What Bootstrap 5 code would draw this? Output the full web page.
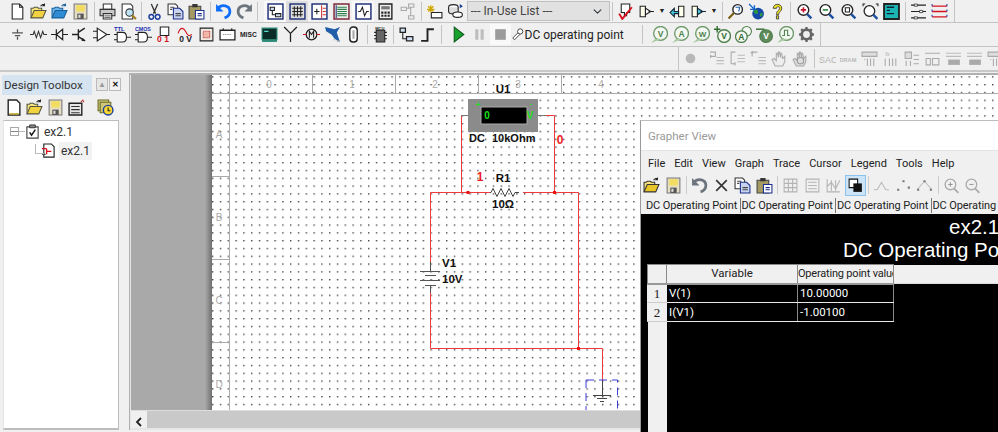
<!DOCTYPE html>
<html lang="en">
<head>
<meta charset="UTF-8">
<title>Multisim - ex2.1</title>
<link href="https://cdn.jsdelivr.net/npm/bootstrap@5.3.0/dist/css/bootstrap.min.css" rel="stylesheet">
<style>
html, body { height: 100%; }
body { background: #f0f0f0; overflow: hidden; font-family: Roboto, "Liberation Sans", sans-serif; font-size: 12px; color: #222; }
.app { width: 998px; height: 432px; overflow: hidden; }
/* toolbars */
.tbar { height: 23px; background: #f0f0f0; border-bottom: 1px solid #c4c4c4; align-items: center; }
.tbar-1 { height: 23px; }
.tbar-2 { height: 24px; }
.tbar-3 { height: 25px; border-bottom: 2px solid #c8c8c8; }
.tb-end { border-right: 1px solid #c4c4c4; height: 100%; }
.tb-btn { width: 21px; height: 21px; display: flex; align-items: center; justify-content: center; flex: none; }
.tb-btn svg { width: 17px; height: 17px; }
.tb-wide { width: 22px; }
.tb-on { background: #f9f9f9; }
.tb-on2 { background: #dedede; }
.tb-wrench { width: 14px; }
.tb-flip { transform: scaleX(-1); }
.tb-sep { width: 1px; height: 19px; background: #c4c4c4; margin: 0 2px 0 2.5px; flex: none; }
.tb-sepw { margin-right: 6px; }
.tb-caret { width: 10px; text-align: center; font-size: 7px; color: #222; flex: none; }
.pad-l { width: 7px; flex: none; }
.pad-r3 { padding-left: 3px; }
.pad-g5 { width: 5px; flex: none; }
.inuse { width: 143px; height: 20px; margin-left: 1px; flex: none; padding: 0 24px 0 3px; font-family: Roboto, sans-serif; font-size: 12px; line-height: 18px; color: #444; background-color: #e1e1e1; border: 1px solid #c0c0c0; border-radius: 0; background-size: 11px 9px; background-position: right 6px center; }
.sim-name { width: 115px; font-size: 12px; white-space: nowrap; color: #222; flex: none; }
.tb-gap { width: 678px; flex: none; }
.tb-ghost { border-left: 1px solid #c4c4c4; height: 100%; padding-left: 1px; }
/* toolbox */
.toolbox { width: 128px; flex: none; height: 100%; }
.box-head { height: 23px; padding: 3px 0 0 2px; }
.box-title { width: 90px; height: 20px; background: #d6e4f1; font-size: 11.500px; line-height: 20px; padding-left: 2px; color: #333; white-space: nowrap; }
.box-btn { width: 12px; height: 13px; margin-top: 3px; line-height: 11px; text-align: center; font-size: 8px; background: #e6e6e6; border: 1px solid #bbb; color: #999; }
.box-close { margin-left: 1px; font-weight: 700; color: #111; background: #f2f2f2; }
.box-tools { height: 25px; padding-left: 3px; }
.box-tools .tb-btn { width: 21px; }
.box-last { margin-left: 8px; }
.tree { width: 116px; margin-left: 3px; height: 310px; background: #fff; border: 1px solid #bdbdbd; border-left-color: #e5e5e5; border-bottom-width: 2px; position: relative; }
.tree-row { height: 17px; white-space: nowrap; font-size: 12px; color: #333; align-items: center; }
.tree-row svg { width: 15px; height: 15px; flex: none; }
.tree-a { padding: 4px 0 0 6px; }
.tree-b { margin-left: 37px; }
.tree-b span { background: #f2f2f2; padding: 0 2px; margin-left: 3px; }
.tree-exp { width: 9px; height: 9px; border: 1px solid #a8a8a8; background: linear-gradient(#fff 3px, #888 3px, #888 4px, #fff 4px); flex: none; }
.tree-link { width: 6px; height: 1px; background: #bbb; flex: none; }
.tree-el { position: absolute; left: 31px; top: 23px; width: 9px; height: 10px; border-left: 1px solid #bbb; border-bottom: 1px solid #bbb; }
/* workspace */
.work { height: 360px; position: relative; }
.design { position: absolute; left: 1px; top: 1px; right: 0; bottom: 2px; border-left: 1px solid #b0b0b0; border-top: 2px solid #b0b0b0; padding-left: 1px; background: #e6e6e6; }
.sheet-row { height: 335px; }
.sheet-grey { width: 81px; background: linear-gradient(90deg, #a9a9a9 0, #a9a9a9 74px, #6f6f6f 81px); flex: none; }
.sheet { flex: 1 1 auto; background: #fff; position: relative; overflow: hidden; }
.sheet svg { position: absolute; left: 0; top: 0; }
.hscroll { height: 18px; background: #c9c9c9; border-top: 1px solid #ddd; }
.hscroll-btn { width: 16px; background: #f0f0f0; text-align: center; }
.hscroll-btn svg { width: 8px; height: 10px; margin-top: 3px; }
/* grapher window */
.grapher { position: absolute; left: 512px; top: 48px; width: 358px; height: 312px; background: #f0f0f0; border-left: 1px solid #9a9a9a; border-top: 1px solid #bcbcbc; overflow: hidden; }
.gr-title { height: 29px; flex: none; background: #fff; color: #9a9a9a; font-size: 11.500px; line-height: 30px; padding-left: 7px; }
.gr-menu { height: 24px; flex: none; gap: 9px; padding: 3px 0 0 7px; font-size: 11px; color: #222; align-items: center; border-top: 1px solid #e4e4e4; }
.gr-tools { height: 22px; flex: none; align-items: center; }
.gr-tools .tb-btn { width: 21.500px; height: 21px; }
.gr-tools .tb-sep { height: 18px; background: #ccc; margin: 0 2px; }
.gr-on { background: #cde4f7; border: 1px solid #8cc2ec; }
.gr-tabs { height: 18px; flex: none; padding-left: 5px; font-size: 11px; letter-spacing: -.1px; white-space: nowrap; color: #222; align-items: center; }
.gr-tab { width: 94.500px; flex: none; border-right: 1px solid #777; height: 15px; line-height: 15px; margin-right: 1px; overflow: hidden; }
.gr-tab-last { border-right: 0; }
.gr-plot { flex: 1 1 auto; background: #000; color: #fff; font-family: "Liberation Sans", Arial, sans-serif; font-size: 20.500px; line-height: 23px; white-space: nowrap; padding-top: 1px; }
.gr-l1 { padding-left: 308px; }
.gr-l2 { padding-left: 202px; }
.gr-grid { margin: 3px 0 0 6px; width: 351px; table-layout: fixed; border-collapse: collapse; font-family: Roboto, sans-serif; font-size: 11.500px; }
.gr-grid th, .gr-grid td { padding: 0 2px; height: 19px; line-height: 17px; font-weight: 400; border: 1px solid #8a8a8a; white-space: nowrap; overflow: hidden; }
.gr-grid thead th { background: #f0f0f0; color: #222; text-align: center; border-bottom: 2px solid #999; }
.gr-grid tbody td { background: #000; color: #fff; border-color: #e8e8e8 #8a8a8a #e8e8e8 #fff; }
.gr-grid tbody th { background: #f0f0f0; color: #222; text-align: center; font-family: "Liberation Serif", serif; font-size: 13px; border-color: #f0f0f0; border-bottom-color: #ccc; }
.gr-grid thead .gr-fill { border: 0; border-bottom: 1px solid #ddd; }
.gr-grid tbody .gr-none { background: #000; border: 0; }
.gr-grid tbody .gr-rest { height: 112px; border: 0; }
.gr-grid thead .gr-op { padding: 0; font-size: 11px; letter-spacing: -.2px; }
.gr-c0 { width: 19px; }
.gr-c1 { width: 131px; }
.gr-c2 { width: 96px; }
</style>
</head>
<body>
<!-- shared icon shapes -->
<svg width="0" height="0" class="position-absolute">
  <defs>
    <symbol id="i-new" viewBox="0 0 16 16"><path d="M3 1h7l3 3v11H3z" fill="#fff" stroke="#222"/><path d="M10 1v3h3" fill="none" stroke="#222"/></symbol>
    <symbol id="i-open" viewBox="0 0 16 16"><path d="M1 14V5h2l1-1h3l1 1h3v2" fill="#f6e27a" stroke="#554"/><path d="M1 14l3-7h11l-3 7z" fill="#f2d23e" stroke="#554"/><path d="M10 3c1-2 3-2 4-1" fill="none" stroke="#222"/><path d="M14 0v3h-3z" fill="#222"/></symbol>
    <symbol id="i-openb" viewBox="0 0 16 16"><path d="M1 14V5h2l1-1h3l1 1h3v2" fill="#6db4ea" stroke="#17609c"/><path d="M1 14l3-7h11l-3 7z" fill="#2f8bd2" stroke="#17609c"/><path d="M10 3c1-2 3-2 4-1" fill="none" stroke="#17609c"/><path d="M14 0v3h-3z" fill="#17609c"/></symbol>
    <symbol id="i-save" viewBox="0 0 16 16"><path d="M2 1h12v14H2z" fill="#e5e0c4" stroke="#777"/><path d="M4 2h8v6H4z" fill="#f3dd60"/><path d="M5 10h6v5H5z" fill="#555"/><path d="M6 11h2v3H6z" fill="#ddd"/></symbol>
    <symbol id="i-print" viewBox="0 0 16 16"><path d="M4 1h8v5H4z" fill="#fff" stroke="#333"/><path d="M1 6h14v6H1z" fill="#c9c9c9" stroke="#333"/><path d="M4 10h8v5H4z" fill="#fff" stroke="#333"/><path d="M5 12h6M5 13.500h6" stroke="#777"/></symbol>
    <symbol id="i-prev" viewBox="0 0 16 16"><path d="M2 1h8l2 2v12H2z" fill="#fff" stroke="#333"/><circle cx="9" cy="9" r="3.500" fill="#bfe3f4" stroke="#333"/><path d="M11.500 11.500L15 15" stroke="#a67c1e" stroke-width="2"/></symbol>
    <symbol id="i-cut" viewBox="0 0 16 16"><path d="M5 1l4 9M11 1L7 10" stroke="#333" stroke-width="1.200" fill="none"/><circle cx="5" cy="13" r="2.200" fill="none" stroke="#1b3c9c" stroke-width="1.400"/><circle cx="11" cy="13" r="2.200" fill="none" stroke="#1b3c9c" stroke-width="1.400"/></symbol>
    <symbol id="i-copy" viewBox="0 0 16 16"><path d="M1 1h7l2 2v8H1z" fill="#fff" stroke="#333"/><path d="M6 5h6l3 3v7H6z" fill="#c7d3f1" stroke="#1b2f8c"/><path d="M3 4h4M3 6h2M8 10h5M8 12h5" stroke="#444"/></symbol>
    <symbol id="i-paste" viewBox="0 0 16 16"><path d="M1 3h11v12H1z" fill="#a59a62" stroke="#444"/><path d="M4 1h5v3H4z" fill="#333"/><path d="M7 7h8v8H7z" fill="#fff" stroke="#1b2f8c"/><path d="M9 10h4M9 12h4" stroke="#1b2f8c"/></symbol>
    <symbol id="i-undo" viewBox="0 0 16 16"><path d="M3 5c3-4 11-3 11 3 0 3-2 5-5 6" fill="none" stroke="currentColor" stroke-width="2.600"/><path d="M1 1v7h7z" fill="currentColor"/></symbol>
    <symbol id="i-view" viewBox="0 0 16 16"><path d="M1 1h14v14H1z" fill="#fff" stroke="#24337a" stroke-width="1.400"/><path d="M3 4h4v3H3zM8 10h5v3H8z" fill="#cfe0f2" stroke="#222"/><path d="M5 7v4h3" fill="none" stroke="#222"/></symbol>
    <symbol id="i-grid" viewBox="0 0 16 16"><path d="M1 1h14v14H1z" fill="#ddd" stroke="#24337a" stroke-width="1.400"/><path d="M3 5h10M3 8h10M3 11h10M5 3v10M8 3v10M11 3v10" stroke="#222"/></symbol>
    <symbol id="i-comp" viewBox="0 0 16 16"><path d="M1 1h14v14H1z" fill="#fff" stroke="#24337a" stroke-width="1.400"/><path d="M10 2v12" stroke="#c33"/><path d="M3 8h5M5.500 5.500v5" stroke="#222"/><path d="M11 5h3M11 8h3M11 11h3" stroke="#c33"/></symbol>
    <symbol id="i-list" viewBox="0 0 16 16"><path d="M1 1h14v14H1z" fill="#eef3ee" stroke="#7c2a3a" stroke-width="1.400"/><path d="M4 4h9M4 6h9M4 8h9M4 10h9M4 12h9" stroke="#2c7f4c"/><path d="M3 2v12" stroke="#24337a"/></symbol>
    <symbol id="i-wave" viewBox="0 0 16 16"><path d="M1 1h14v14H1z" fill="#fff" stroke="#24337a" stroke-width="1.400"/><path d="M3 8h2l2-4 2 8 2-4h2" fill="none" stroke="#222"/></symbol>
    <symbol id="i-calc" viewBox="0 0 16 16"><path d="M2 1h12v14H2z" fill="#eee" stroke="#222" stroke-width="1.300"/><path d="M4 3h8v3H4z" fill="#777"/><path d="M4 8h2v2H4zM7 8h2v2H7zM10 8h2v2h-2zM4 11h2v2H4zM7 11h2v2H7zM10 11h2v2h-2z" fill="#222"/></symbol>
    <symbol id="i-tree" viewBox="0 0 16 16"><path d="M2 4h5v3H2zM9 1h5v3H9zM9 12h5v3H9z" fill="#eee" stroke="#aaa"/><path d="M11 4v8M7 5h4" stroke="#aaa" fill="none"/></symbol>
    <symbol id="i-place" viewBox="0 0 16 16"><path d="M5 9h10v5H5z" fill="#fff" stroke="#222"/><path d="M1 6h7M4.500 2v7M2 3l5 5M7 3L2 8" stroke="#d1a800" stroke-width="1.200"/></symbol>
    <symbol id="i-db" viewBox="0 0 16 16"><ellipse cx="6" cy="4" rx="4.500" ry="2.500" fill="#fff" stroke="#222"/><path d="M1.500 4v4c0 3 9 3 9 0V4" fill="#ddd" stroke="#222"/><ellipse cx="10" cy="11" rx="4.500" ry="2.500" fill="#fff" stroke="#222"/><path d="M12 1l3 2-3 2z" fill="#1b3c9c"/></symbol>
    <symbol id="i-check" viewBox="0 0 16 16"><path d="M4 1h8v8H9v3H7V9H4z" fill="#fff" stroke="#222"/><path d="M2 10l3 5 9-11" fill="none" stroke="#d5121e" stroke-width="1.800"/></symbol>
    <symbol id="i-comp2" viewBox="0 0 16 16"><path d="M2 3h5v10H2z" fill="#ffe" stroke="#222"/><path d="M7 5l5 3-5 3z" fill="#fff" stroke="#222"/><path d="M10 8h5" stroke="#222"/></symbol>
    <symbol id="i-comp3" viewBox="0 0 16 16"><path d="M2 3h5v10H2z" fill="#ffe" stroke="#222"/><path d="M7 5l5 3-5 3z" fill="#45c6d8" stroke="#123"/><path d="M10 8h5" stroke="#123"/></symbol>
    <symbol id="i-back" viewBox="0 0 16 16"><path d="M9 3h5v10H9z" fill="#ffe" stroke="#222"/><path d="M9 8H5V5L1 9l4 4v-3h4z" fill="#45c6d8" stroke="#123"/></symbol>
    <symbol id="i-find" viewBox="0 0 16 16"><circle cx="10" cy="6" r="4.500" fill="#fff" stroke="#222" stroke-width="1.300"/><path d="M6.500 9.500L1.500 14.500" stroke="#7a5b10" stroke-width="2"/><path d="M8 4h4l-1 4" fill="none" stroke="#1b5fb0"/></symbol>
    <symbol id="i-globe" viewBox="0 0 16 16"><circle cx="9.500" cy="10" r="5.500" fill="#174aa8"/><path d="M7 6c2 0 3 2 2 4-2 1-3-1-4-2M12 9l2 1-1 3-2-1z" fill="#2c9a3c"/><path d="M1 1l5 5M6 2v4H2" fill="none" stroke="#1166cc" stroke-width="1.300"/></symbol>
    <symbol id="i-help" viewBox="0 0 16 16"><path d="M4 5c0-5 8-5 8 0 0 3-3 3-3 6H7c0-4 3-4 3-6 0-2-3-2-3 0z" fill="#f5e41c" stroke="#333" stroke-width=".8"/><path d="M7 12h2v3H7z" fill="#f5e41c" stroke="#333" stroke-width=".8"/></symbol>
    <symbol id="i-zin" viewBox="0 0 16 16"><circle cx="7" cy="6.500" r="5" fill="#fff" stroke="#222" stroke-width="1.300"/><path d="M4.500 6.500h5M7 4v5" stroke="#c4122f" stroke-width="1.500"/><path d="M10.500 10.500l4 4" stroke="#1d4fa0" stroke-width="2.200"/></symbol>
    <symbol id="i-zout" viewBox="0 0 16 16"><circle cx="7" cy="6.500" r="5" fill="#fff" stroke="#222" stroke-width="1.300"/><path d="M4.500 6.500h5" stroke="#2c8a3c" stroke-width="1.500"/><path d="M10.500 10.500l4 4" stroke="#1d4fa0" stroke-width="2.200"/></symbol>
    <symbol id="i-zarea" viewBox="0 0 16 16"><circle cx="7" cy="6.500" r="5" fill="#fff" stroke="#222" stroke-width="1.300"/><path d="M5 4.500h4v4H5z" fill="none" stroke="#222"/><path d="M10.500 10.500l4 4" stroke="#1d4fa0" stroke-width="2.200"/></symbol>
    <symbol id="i-zfit" viewBox="0 0 16 16"><circle cx="7" cy="7.500" r="5" fill="#fff" stroke="#222" stroke-width="1.200"/><path d="M1 3V1h2M13 1h2v2" fill="none" stroke="#222"/><path d="M10.500 11l4 4" stroke="#1d4fa0" stroke-width="2.200"/></symbol>
    <symbol id="i-panel" viewBox="0 0 16 16"><path d="M1 1h14v14H1z" fill="#1bb5b5" stroke="#222" stroke-width="1.800"/><path d="M3.500 4h7M3.500 7h3M3.500 10h7" stroke="#123" stroke-width="1.200"/></symbol>
    <symbol id="i-spread" viewBox="0 0 16 16"><path d="M1 2h14M1 8h14M1 14h14" stroke="#222"/><path d="M4 1h3v2H4zM9 7h3v2H9zM4 13h3v2H4z" fill="#fff" stroke="#222" stroke-width=".7"/></symbol>
    <symbol id="i-bus" viewBox="0 0 16 16"><path d="M1 3h14M1 8h14M1 13h14" stroke="#d5121e" stroke-width="1.200"/><path d="M1 1v14M15 1v14" stroke="#1d3fa0" stroke-dasharray="2 3"/></symbol>
    <symbol id="i-src" viewBox="0 0 16 16"><path d="M8 3v3M8 10v3M3 6.500h10M5.500 9h5" stroke="#555" stroke-width="1.200"/></symbol>
    <symbol id="i-res" viewBox="0 0 16 16"><path d="M0 8h3l1-3 2 6 2-6 2 6 2-6 1 3h3" fill="none" stroke="#333"/></symbol>
    <symbol id="i-dio" viewBox="0 0 16 16"><path d="M0 8h5M11 8h5M5 3v10M11 3v10M5 8l6-5v10z" fill="none" stroke="#222" stroke-width="1.100"/></symbol>
    <symbol id="i-tra" viewBox="0 0 16 16"><path d="M0 8h6M6 3v10M6 6l6-4M6 10l6 4" fill="none" stroke="#222" stroke-width="1.300"/><path d="M10 11l3 3-4 0z" fill="#222"/></symbol>
    <symbol id="i-opa" viewBox="0 0 16 16"><path d="M4 2l9 6-9 6z" fill="#fff" stroke="#222" stroke-width="1.100"/><path d="M0 5h4M0 11h4M13 8h3" stroke="#222"/></symbol>
    <symbol id="i-ttl" viewBox="0 0 16 16"><path d="M3 6h5c5 0 5 9 0 9H3z" fill="#fff" stroke="#222"/><path d="M0 8h3M0 13h3M12 10.500h4" stroke="#222"/><text x="0" y="5" font-size="5.500" font-weight="700" fill="#1a2fb0" font-family="Liberation Sans, sans-serif">TTL</text></symbol>
    <symbol id="i-cmos" viewBox="0 0 16 16"><path d="M3 6h5c5 0 5 9 0 9H3z" fill="#fff" stroke="#222"/><path d="M0 8h3M0 13h3M12 10.500h4" stroke="#222"/><text x="0" y="5" font-size="5" font-weight="700" fill="#1a2fb0" font-family="Liberation Sans, sans-serif">CMOS</text></symbol>
    <symbol id="i-mix" viewBox="0 0 16 16"><path d="M4 1h8v8H4z" fill="#fff" stroke="#222"/><text x="1" y="15" font-size="8" font-weight="700" fill="#d5121e" font-family="Liberation Sans, sans-serif">0 1</text></symbol>
    <symbol id="i-ana" viewBox="0 0 16 16"><path d="M1 7c2-6 5-6 7-2s3 5 6 3" fill="none" stroke="#d5121e"/><text x="2" y="15" font-size="8" font-weight="700" fill="#222" font-family="Liberation Sans, sans-serif">0 V</text></symbol>
    <symbol id="i-ind" viewBox="0 0 16 16"><path d="M2 2h12v12H2z" fill="#f2e9e4" stroke="#222"/><path d="M5 5h6v6H5z" fill="#f1b7a8" stroke="#b62a2a" stroke-dasharray="1 1"/></symbol>
    <symbol id="i-pow" viewBox="0 0 16 16"><path d="M1 4h14v9H1z" fill="#fff" stroke="#222" stroke-width="1.200"/><path d="M4 2v2M12 2v2" stroke="#222"/><path d="M4 8h8" stroke="#777" stroke-dasharray="1 1"/></symbol>
    <symbol id="i-misc" viewBox="0 0 16 16"><text x="0" y="10.500" font-size="6.300" font-weight="700" fill="#222" font-family="Liberation Sans, sans-serif">MISC</text></symbol>
    <symbol id="i-lcd" viewBox="0 0 16 16"><path d="M1 2h14v11H1z" fill="#0c2c2a" stroke="#2b8a78"/><path d="M1 13h14v2H1z" fill="#2b8a78"/><path d="M3 5h4" stroke="#6fe"/></symbol>
    <symbol id="i-ant" viewBox="0 0 16 16"><path d="M8 7v8M2 1l6 6 6-6" fill="none" stroke="#222" stroke-width="1.200"/></symbol>
    <symbol id="i-elec" viewBox="0 0 16 16"><circle cx="8" cy="8" r="5" fill="#eee" stroke="#222" stroke-width="1.200"/><path d="M6 11V5l2 3 2-3v6" fill="none" stroke="#222"/><path d="M0 8h3M13 8h3" stroke="#d5121e"/></symbol>
    <symbol id="i-ni" viewBox="0 0 16 16"><path d="M1 1l9 2 5-2-3 5 3 9-5-3-3-4-5-3z" fill="#1f5da8"/><path d="M9 13h1M12 14h2" stroke="#999"/></symbol>
    <symbol id="i-conn" viewBox="0 0 16 16"><rect x="4.500" y="1" width="7" height="14" rx="3" fill="#fff" stroke="#222" stroke-width="1.300"/><path d="M7 4h2v8H7z" fill="#aaa"/></symbol>
    <symbol id="i-mcu" viewBox="0 0 16 16"><path d="M4 4h8v11H4z" fill="#666" stroke="#222"/><path d="M2 6h2M2 9h2M2 12h2M12 6h2M12 9h2M12 12h2" stroke="#222"/><text x="3" y="3.500" font-size="3.800" font-weight="700" fill="#222" font-family="Liberation Sans, sans-serif">MCU</text></symbol>
    <symbol id="i-hier" viewBox="0 0 16 16"><path d="M2 2h5v4H2zM8 10h6v4H8z" fill="#d3e1f5" stroke="#222" stroke-width="1.200"/><path d="M4.500 6v6H8" fill="none" stroke="#222"/></symbol>
    <symbol id="i-step" viewBox="0 0 16 16"><path d="M2 14h6V3h6" fill="none" stroke="#222" stroke-width="1.800"/></symbol>
    <symbol id="i-play" viewBox="0 0 16 16"><path d="M4 1l9 7-9 7z" fill="#18a12c" stroke="#0d5b1a"/></symbol>
    <symbol id="i-pause" viewBox="0 0 16 16"><path d="M4 3h3v10H4zM9 3h3v10H9z" fill="#bdbdbd"/></symbol>
    <symbol id="i-stop" viewBox="0 0 16 16"><path d="M3 3h10v10H3z" fill="#9c9c9c"/></symbol>
    <symbol id="i-wrench" viewBox="0 0 16 16"><path d="M2 12l6-6 2 2-6 6z" fill="#fff" stroke="#333"/><circle cx="10.500" cy="4.500" r="3" fill="#fff" stroke="#333"/></symbol>
    <symbol id="i-probe" viewBox="0 0 16 16"><circle cx="9" cy="7" r="6.500" fill="#f4f8f2" stroke="#6f9a6c" stroke-width="1.300"/><path d="M0 16l4-4h6z" fill="#a8c9a0"/><text x="9" y="10" text-anchor="middle" font-size="8" font-weight="700" fill="#4f7f4c" font-family="Liberation Sans, sans-serif">V</text></symbol>
    <symbol id="i-proba" viewBox="0 0 16 16"><circle cx="9" cy="7" r="6.500" fill="#f4f8f2" stroke="#6f9a6c" stroke-width="1.300"/><path d="M0 16l4-4h6z" fill="#a8c9a0"/><text x="9" y="10" text-anchor="middle" font-size="8" font-weight="700" fill="#4f7f4c" font-family="Liberation Sans, sans-serif">A</text></symbol>
    <symbol id="i-probw" viewBox="0 0 16 16"><circle cx="9" cy="7" r="6.500" fill="#f4f8f2" stroke="#6f9a6c" stroke-width="1.300"/><path d="M0 16l4-4h6z" fill="#a8c9a0"/><text x="9" y="10" text-anchor="middle" font-size="7.500" font-weight="700" fill="#4f7f4c" font-family="Liberation Sans, sans-serif">W</text></symbol>
    <symbol id="i-probp" viewBox="0 0 16 16"><circle cx="9.500" cy="9.500" r="6" fill="#f4f8f2" stroke="#4f7f4c" stroke-width="1.300"/><path d="M0 3h6M3 0v6" stroke="#2e6b2c" stroke-width="1.300"/><text x="9.500" y="12.500" text-anchor="middle" font-size="8" font-weight="700" fill="#2e6b2c" font-family="Liberation Sans, sans-serif">V</text></symbol>
    <symbol id="i-probd" viewBox="0 0 16 16"><circle cx="11" cy="5" r="4.500" fill="#f4f8f2" stroke="#4f7f4c"/><circle cx="6" cy="10" r="5.500" fill="#f4f8f2" stroke="#4f7f4c" stroke-width="1.200"/><text x="6" y="13" text-anchor="middle" font-size="8" font-weight="700" fill="#2e6b2c" font-family="Liberation Sans, sans-serif">A</text></symbol>
    <symbol id="i-probm" viewBox="0 0 16 16"><circle cx="9.500" cy="9.500" r="6" fill="#5f8a5c" stroke="#4f7f4c"/><path d="M0 3h8" stroke="#2e6b2c" stroke-width="1.300"/><text x="9.500" y="12.500" text-anchor="middle" font-size="8" font-weight="700" fill="#fff" font-family="Liberation Sans, sans-serif">V</text></symbol>
    <symbol id="i-probs" viewBox="0 0 16 16"><circle cx="9" cy="7" r="6.500" fill="#f4f8f2" stroke="#6f9a6c" stroke-width="1.300"/><path d="M0 16l4-4h6z" fill="#a8c9a0"/><path d="M5 9h2V4h3v5h2" fill="none" stroke="#4f7f4c"/></symbol>
    <symbol id="i-gear" viewBox="0 0 16 16"><circle cx="8" cy="8" r="4.500" fill="none" stroke="#666" stroke-width="2.600"/><path d="M8 1v3M8 12v3M1 8h3M12 8h3M3 3l2 2M11 11l2 2M13 3l-2 2M5 11l-2 2" stroke="#666" stroke-width="2.200"/></symbol>
    <symbol id="g-dot" viewBox="0 0 16 16"><circle cx="8" cy="8" r="4.500" fill="#b8b8b8"/></symbol>
    <symbol id="g-s1" viewBox="0 0 16 16"><path d="M8 7h7M8 10h7M8 13h7" stroke="#bbb"/><path d="M2 2h5v4H2" fill="none" stroke="#aaa"/><path d="M2 4l2 2-2 2z" fill="#aaa"/></symbol>
    <symbol id="g-s2" viewBox="0 0 16 16"><path d="M8 5h7M8 8h7M8 11h7" stroke="#bbb"/><path d="M6 2H2v11h4" fill="none" stroke="#aaa"/><path d="M4 13l2-2v4z" fill="#aaa"/></symbol>
    <symbol id="g-s3" viewBox="0 0 16 16"><path d="M8 7h7M8 10h7M8 13h7" stroke="#bbb"/><path d="M2 6V2h5" fill="none" stroke="#aaa"/><path d="M0 3l2-2 2 2z" fill="#aaa"/></symbol>
    <symbol id="g-hand" viewBox="0 0 16 16"><path d="M4 15L1 9l2-1 2 2V3l1 0 1 4V2l1 0 1 5V3l1 0 1 5 2-2v5l-2 4z" fill="#eee" stroke="#aaa"/></symbol>
    <symbol id="g-hand2" viewBox="0 0 16 16"><path d="M4 15L1 9l2-1 2 2V3l1 0 1 4V2l1 0 1 5V3l1 0 1 5 2-2v5l-2 4z" fill="#ddd" stroke="#aaa"/><circle cx="8" cy="10" r="3" fill="none" stroke="#999"/></symbol>
    <symbol id="g-sac" viewBox="0 0 16 16"><text x="0" y="12" font-size="8.500" fill="#b3b3b3" font-family="Liberation Sans, sans-serif">SAC</text></symbol>
    <symbol id="g-dram" viewBox="0 0 16 16"><text x="-.5" y="11" font-size="5.300" font-weight="700" fill="#b9b9b9" font-family="Liberation Sans, sans-serif">DRAM</text></symbol>
    <symbol id="g-t1" viewBox="0 0 16 16"><path d="M1 2h14v4H1z" fill="#ddd" stroke="#aaa"/><path d="M6 8v7M9 8v7M12 8v7M3 9h1" stroke="#aaa"/></symbol>
    <symbol id="g-t2" viewBox="0 0 16 16"><path d="M3 8v7M7 8v7M13 8v7M10 8v7" stroke="#aaa"/><text x="3" y="6" font-size="5.500" fill="#aaa" font-family="Liberation Sans, sans-serif">fx</text></symbol>
    <symbol id="g-t3" viewBox="0 0 16 16"><path d="M2 2h6v6H2z" fill="#ddd" stroke="#aaa"/><path d="M3 10v5M7 10v5M10 5h5M10 9h5M10 13h5" stroke="#aaa"/></symbol>
    <symbol id="g-t4" viewBox="0 0 16 16"><path d="M1 3h14M2 8h4v6H2zM8 8h6v6H8z" fill="none" stroke="#aaa"/></symbol>
    <symbol id="g-t5" viewBox="0 0 16 16"><path d="M1 3h14M1 6h14" stroke="#bbb"/><path d="M3 9h11v5H3z" fill="#aaa"/></symbol>
    <symbol id="gr-open" viewBox="0 0 16 16"><path d="M1 14V5h2l1-1h3l1 1h3v2" fill="#f6e27a" stroke="#333"/><path d="M1 14l3-7h11l-3 7z" fill="#e8c628" stroke="#333"/><path d="M10 3c1-2 3-2 4-1" fill="none" stroke="#222"/><path d="M14 0v3h-3z" fill="#222"/></symbol>
    <symbol id="gr-x" viewBox="0 0 16 16"><path d="M3 3l10 10M13 3L3 13" stroke="#333" stroke-width="1.500"/></symbol>
    <symbol id="gr-grid" viewBox="0 0 16 16"><path d="M2 2v12h12V2zM2 6h12M2 10h12M6 2v12M10 2v12" fill="none" stroke="#b3b3b3"/></symbol>
    <symbol id="gr-lines" viewBox="0 0 16 16"><path d="M2 2h12v12H2zM4 5h8M4 8h8M4 11h8" fill="none" stroke="#b3b3b3"/></symbol>
    <symbol id="gr-plot" viewBox="0 0 16 16"><path d="M2 2v12h12M6 3v10M10 3v10M2 9l4-4 4 6 4-8" fill="none" stroke="#b3b3b3"/></symbol>
    <symbol id="gr-rev" viewBox="0 0 16 16"><path d="M2 2h8v8H2z" fill="#fff" stroke="#111"/><path d="M6 6h8v8H6z" fill="#111"/></symbol>
    <symbol id="gr-peak" viewBox="0 0 16 16"><path d="M1 12h3l4-7 4 7h3" fill="none" stroke="#b9b9b9"/></symbol>
    <symbol id="gr-pts" viewBox="0 0 16 16"><path d="M2 11h2v2H2zM7 3h2v2H7zM12 9h2v2h-2z" fill="#777"/></symbol>
    <symbol id="gr-both" viewBox="0 0 16 16"><path d="M1 12l7-8 7 8" fill="none" stroke="#bbb"/><path d="M1 11h2v2H1zM7 3h2v2H7zM13 11h2v2h-2z" fill="#777"/></symbol>
    <symbol id="gr-zin" viewBox="0 0 16 16"><circle cx="7" cy="7" r="5" fill="none" stroke="#aaa" stroke-width="1.200"/><path d="M5 7h4M7 5v4" stroke="#999"/><path d="M10.500 11l4 4" stroke="#aaa" stroke-width="1.800"/></symbol>
    <symbol id="gr-zout" viewBox="0 0 16 16"><circle cx="7" cy="7" r="5" fill="none" stroke="#aaa" stroke-width="1.200"/><path d="M5 7h4" stroke="#999"/><path d="M10.500 11l4 4" stroke="#aaa" stroke-width="1.800"/></symbol>
    <symbol id="b-new" viewBox="0 0 16 16"><path d="M3 1h8l3 3v11H3z" fill="#fff" stroke="#222" stroke-width="1.300"/><path d="M4 14h9" stroke="#c8b23a" stroke-width="1.500"/></symbol>
    <symbol id="b-win" viewBox="0 0 16 16"><path d="M1 4h12v11H1z" fill="#e6e6e6" stroke="#222" stroke-width="1.300"/><path d="M3 7h8M3 10h8M3 13h8" stroke="#333"/><path d="M12 3l2-2 1 2" fill="none" stroke="#b93a3a"/></symbol>
    <symbol id="b-stack" viewBox="0 0 16 16"><path d="M1 1h10v10H1z" fill="#cfc87a" stroke="#6a6a24"/><path d="M3 3h10v10H3z" fill="#cfc87a" stroke="#6a6a24"/><circle cx="10.500" cy="10.500" r="4.500" fill="#f5d632" stroke="#1b3c9c" stroke-width="1.300"/><path d="M10.500 8v3h2" stroke="#222" fill="none"/></symbol>
    <symbol id="t-proj" viewBox="0 0 16 16"><path d="M2 3h12v12H2z" fill="#fff" stroke="#444" stroke-width="1.200"/><path d="M5 1h6v3H5z" fill="#888" stroke="#333"/><path d="M5 9l2 3 4-6" fill="none" stroke="#111" stroke-width="1.500"/></symbol>
    <symbol id="t-sheet" viewBox="0 0 16 16"><path d="M3 1h8l3 3v11H3z" fill="#fff" stroke="#222" stroke-width="1.200"/><path d="M1 6h5M6 6v6M6 9h5" fill="none" stroke="#d5121e" stroke-width="1.400"/><path d="M1 12h4" stroke="#222"/></symbol>
  </defs>
</svg>

<div class="app d-flex flex-column">
  <!-- standard toolbar -->
  <div class="tbar tbar-1 d-flex">
    <div class="pad-l"></div>
    <div class="tb-btn"><svg><use href="#i-new"/></svg></div>
    <div class="tb-btn"><svg><use href="#i-open"/></svg></div>
    <div class="tb-btn"><svg><use href="#i-openb"/></svg></div>
    <div class="tb-btn"><svg><use href="#i-save"/></svg></div>
    <div class="tb-sep"></div>
    <div class="tb-btn"><svg><use href="#i-print"/></svg></div>
    <div class="tb-btn"><svg><use href="#i-prev"/></svg></div>
    <div class="tb-sep"></div>
    <div class="tb-btn"><svg><use href="#i-cut"/></svg></div>
    <div class="tb-btn"><svg><use href="#i-copy"/></svg></div>
    <div class="tb-btn"><svg><use href="#i-paste"/></svg></div>
    <div class="tb-sep"></div>
    <div class="tb-btn text-primary"><svg><use href="#i-undo"/></svg></div>
    <div class="tb-btn text-secondary"><svg class="tb-flip"><use href="#i-undo"/></svg></div>
    <div class="tb-sep tb-sepw"></div>
    <div class="tb-btn tb-wide tb-on"><svg><use href="#i-view"/></svg></div>
    <div class="tb-btn tb-wide tb-on2"><svg><use href="#i-grid"/></svg></div>
    <div class="tb-btn tb-wide"><svg><use href="#i-comp"/></svg></div>
    <div class="tb-btn tb-wide"><svg><use href="#i-list"/></svg></div>
    <div class="tb-btn tb-wide tb-on"><svg><use href="#i-wave"/></svg></div>
    <div class="tb-btn tb-wide"><svg><use href="#i-calc"/></svg></div>
    <div class="tb-btn tb-wide"><svg><use href="#i-tree"/></svg></div>
    <div class="tb-sep"></div>
    <div class="tb-btn"><svg><use href="#i-place"/></svg></div>
    <div class="tb-btn"><svg><use href="#i-db"/></svg></div>
    <select class="form-select inuse"><option>--- In-Use List ---</option></select>
    <div class="tb-sep"></div>
    <div class="tb-btn"><svg><use href="#i-check"/></svg></div>
    <div class="tb-btn"><svg><use href="#i-comp2"/></svg></div>
    <div class="tb-caret">&#9660;</div>
    <div class="tb-btn"><svg><use href="#i-back"/></svg></div>
    <div class="tb-btn"><svg><use href="#i-comp3"/></svg></div>
    <div class="tb-caret">&#9660;</div>
    <div class="tb-sep"></div>
    <div class="tb-btn"><svg><use href="#i-find"/></svg></div>
    <div class="tb-btn"><svg><use href="#i-globe"/></svg></div>
    <div class="tb-btn"><svg><use href="#i-help"/></svg></div>
    <div class="tb-sep"></div>
    <div class="tb-btn tb-wide"><svg><use href="#i-zin"/></svg></div>
    <div class="tb-btn tb-wide"><svg><use href="#i-zout"/></svg></div>
    <div class="tb-btn tb-wide"><svg><use href="#i-zarea"/></svg></div>
    <div class="tb-btn tb-wide"><svg><use href="#i-zfit"/></svg></div>
    <div class="tb-btn"><svg><use href="#i-panel"/></svg></div>
    <div class="tb-sep"></div>
    <div class="tb-btn"><svg><use href="#i-spread"/></svg></div>
    <div class="tb-btn"><svg><use href="#i-bus"/></svg></div>
    <div class="tb-end ps-1"></div>
  </div>
  <!-- components and simulation -->
  <div class="tbar tbar-2 d-flex">
    <div class="pad-l"></div>
    <div class="tb-btn"><svg><use href="#i-src"/></svg></div>
    <div class="tb-btn"><svg><use href="#i-res"/></svg></div>
    <div class="tb-btn"><svg><use href="#i-dio"/></svg></div>
    <div class="tb-btn"><svg><use href="#i-tra"/></svg></div>
    <div class="tb-btn"><svg><use href="#i-opa"/></svg></div>
    <div class="tb-btn"><svg><use href="#i-ttl"/></svg></div>
    <div class="tb-btn"><svg><use href="#i-cmos"/></svg></div>
    <div class="tb-btn"><svg><use href="#i-mix"/></svg></div>
    <div class="tb-btn"><svg><use href="#i-ana"/></svg></div>
    <div class="tb-btn"><svg><use href="#i-ind"/></svg></div>
    <div class="tb-btn"><svg><use href="#i-pow"/></svg></div>
    <div class="tb-btn"><svg><use href="#i-misc"/></svg></div>
    <div class="tb-btn"><svg><use href="#i-lcd"/></svg></div>
    <div class="tb-btn"><svg><use href="#i-ant"/></svg></div>
    <div class="tb-btn"><svg><use href="#i-elec"/></svg></div>
    <div class="tb-btn"><svg><use href="#i-ni"/></svg></div>
    <div class="tb-btn"><svg><use href="#i-conn"/></svg></div>
    <div class="tb-sep"></div>
    <div class="tb-btn"><svg><use href="#i-mcu"/></svg></div>
    <div class="tb-sep"></div>
    <div class="tb-btn"><svg><use href="#i-hier"/></svg></div>
    <div class="tb-btn"><svg><use href="#i-step"/></svg></div>
    <div class="tb-sep tb-sepw"></div>
    <div class="tb-btn"><svg><use href="#i-play"/></svg></div>
    <div class="tb-btn"><svg><use href="#i-pause"/></svg></div>
    <div class="tb-btn tb-on"><svg><use href="#i-stop"/></svg></div>
    <div class="tb-btn tb-wrench"><svg><use href="#i-wrench"/></svg></div>
    <div class="sim-name">DC operating point</div>
    <div class="tb-sep tb-sepw"></div>
    <div class="tb-btn"><svg><use href="#i-probe"/></svg></div>
    <div class="tb-btn"><svg><use href="#i-proba"/></svg></div>
    <div class="tb-btn"><svg><use href="#i-probw"/></svg></div>
    <div class="tb-btn"><svg><use href="#i-probp"/></svg></div>
    <div class="tb-btn"><svg><use href="#i-probd"/></svg></div>
    <div class="tb-btn"><svg><use href="#i-probm"/></svg></div>
    <div class="tb-btn"><svg><use href="#i-probs"/></svg></div>
    <div class="tb-btn"><svg><use href="#i-gear"/></svg></div>
    <div class="tb-end pad-r3"></div>
  </div>
  <!-- greyed out toolbar on the right -->
  <div class="tbar tbar-3 d-flex">
    <div class="tb-gap"></div>
    <div class="tb-ghost d-flex align-items-center">
      <div class="tb-btn"><svg><use href="#g-dot"/></svg></div>
      <div class="pad-g5"></div>
      <div class="tb-btn"><svg><use href="#g-s1"/></svg></div>
      <div class="tb-btn"><svg><use href="#g-s2"/></svg></div>
      <div class="tb-btn"><svg><use href="#g-s3"/></svg></div>
      <div class="tb-btn"><svg><use href="#g-hand"/></svg></div>
      <div class="tb-btn"><svg><use href="#g-hand2"/></svg></div>
      <div class="tb-sep"></div>
      <div class="tb-btn"><svg><use href="#g-sac"/></svg></div>
      <div class="tb-btn"><svg><use href="#g-dram"/></svg></div>
      <div class="tb-btn"><svg><use href="#g-t1"/></svg></div>
      <div class="tb-btn"><svg><use href="#g-t2"/></svg></div>
      <div class="tb-btn"><svg><use href="#g-t3"/></svg></div>
      <div class="tb-btn"><svg><use href="#g-t4"/></svg></div>
      <div class="tb-btn"><svg><use href="#g-t5"/></svg></div>
      <div class="tb-btn"><svg><use href="#g-t5"/></svg></div>
      <div class="tb-btn"><svg><use href="#g-t1"/></svg></div>
    </div>
  </div>

  <div class="d-flex flex-grow-1">
    <!-- design toolbox -->
    <aside class="toolbox">
      <div class="box-head d-flex">
        <div class="box-title">Design Toolbox</div>
        <div class="box-btn ms-1">&#9650;</div>
        <div class="box-btn box-close">&#10005;</div>
      </div>
      <div class="box-tools d-flex align-items-center">
        <div class="tb-btn"><svg><use href="#b-new"/></svg></div>
        <div class="tb-btn"><svg><use href="#i-open"/></svg></div>
        <div class="tb-btn"><svg><use href="#i-save"/></svg></div>
        <div class="tb-btn"><svg><use href="#b-win"/></svg></div>
        <div class="tb-btn box-last"><svg><use href="#b-stack"/></svg></div>
      </div>
      <div class="tree">
        <div class="tree-el"></div>
        <div class="tree-row tree-a d-flex">
          <span class="tree-exp"></span><span class="tree-link"></span>
          <svg><use href="#t-proj"/></svg><span class="ps-1">ex2.1</span>
        </div>
        <div class="tree-row tree-b d-flex mt-1">
          <svg><use href="#t-sheet"/></svg><span>ex2.1</span>
        </div>
      </div>
    </aside>

    <!-- circuit window -->
    <main class="work flex-grow-1">
      <div class="design">
        <div class="sheet-row d-flex">
          <div class="sheet-grey"></div>
          <div class="sheet">
            <svg width="786" height="335" viewBox="212 75 786 335" font-family="Liberation Sans, sans-serif">
              <defs>
                <pattern id="dots" x="212" y="84" width="7.800" height="7.800" patternUnits="userSpaceOnUse">
                  <rect x="0" y="0" width="1.400" height="1.400" fill="#444"/>
                </pattern>
              </defs>
              <rect x="212" y="75" width="786" height="335" fill="url(#dots)"/>
              <!-- rulers -->
              <g stroke="#aaa" fill="none">
                <path d="M212 93.500H998M229.500 75V410M312.500 75V93M395.500 75V93M478.500 75V93M561.500 75V93M212 176.500H229M212 259.500H229M212 342.500H229"/>
              </g>
              <g fill="#aaa" font-size="10" text-anchor="middle">
                <text x="269" y="88">0</text><text x="352" y="88">1</text><text x="435" y="88">2</text><text x="518" y="88">3</text><text x="601" y="88">4</text>
                <text x="219" y="138">A</text><text x="219" y="221">B</text><text x="219" y="304">C</text><text x="219" y="388">D</text>
              </g>
              <!-- wires -->
              <g fill="none" stroke="#ee3a3a">
                <path d="M468 115.500H461.500V192.500M538 115.500H554.500V192.500"/>
                <path d="M430.500 262V192.500H490M523 192.500H578.500V348.500M430.500 293V348.500H602.500V380"/>
              </g>
              <g fill="#e11">
                <rect x="466.500" y="191" width="3" height="3"/><rect x="553" y="191" width="3" height="3"/><rect x="577" y="347" width="3" height="3"/>
              </g>
              <!-- multimeter -->
              <path d="M461 115.500H468M538 115.500H546" stroke="#777" fill="none"/>
              <rect x="468" y="99" width="70" height="33" fill="#8b8b8b"/>
              <rect x="481" y="107" width="46" height="17" fill="#000" stroke="#aaa"/>
              <text x="487" y="119" fill="#19e019" font-size="10" font-weight="700" text-anchor="middle">0</text>
              <text x="530" y="119" fill="#19e019" font-size="10" font-weight="700" text-anchor="middle">V</text>
              <text x="478" y="107" fill="#19e019" font-size="8" font-weight="700" text-anchor="middle">+</text>
              <text x="531" y="106" fill="#19e019" font-size="8" font-weight="700" text-anchor="middle">-</text>
              <text x="503" y="93" font-size="11.500" font-weight="700" text-anchor="middle" fill="#111">U1</text>
              <text x="469" y="142" font-size="11" font-weight="700" fill="#111">DC</text>
              <text x="492" y="142" font-size="11" font-weight="700" fill="#111">10kOhm</text>
              <text x="560" y="144" font-size="12" font-weight="700" text-anchor="middle" fill="#ee1c1c">0</text>
              <text x="480" y="181" font-size="12" font-weight="700" text-anchor="middle" fill="#ee1c1c">1</text>
              <!-- resistor -->
              <path d="M490 192.500h1l2-4 4 8 4-8 4 8 4-8 4 8 2-4h4" fill="none" stroke="#444"/>
              <text x="503" y="182" font-size="11.500" font-weight="700" text-anchor="middle" fill="#111">R1</text>
              <text x="503" y="208" font-size="11.500" font-weight="700" text-anchor="middle" fill="#111">10&#937;</text>
              <!-- battery -->
              <path d="M430.500 262V271M430.500 285V293M420 271.500H440M425 275.500H436M420 280.500H440M425 285.500H436" stroke="#555" fill="none"/>
              <text x="442" y="267" font-size="11.500" font-weight="700" fill="#111">V1</text>
              <text x="442" y="283" font-size="11.500" font-weight="700" fill="#111">10V</text>
              <!-- ground -->
              <path d="M602.500 380V395M593 395.500H611M597 398.500H607M600 401.500H604" stroke="#444" fill="none"/>
              <path d="M586 380H617.500V410M586 380V410" stroke="#3b3bd6" stroke-dasharray="8 5" fill="none"/>
              <path d="M641 383l4 5-4 6z" fill="#e11"/>
            </svg>
          </div>
        </div>
        <div class="hscroll d-flex">
          <div class="hscroll-btn"><svg viewBox="0 0 8 10"><path d="M6 1L2 5l4 4" fill="none" stroke="#222" stroke-width="1.800"/></svg></div>
        </div>
      </div>

      <!-- grapher window over the workspace -->
      <section class="grapher d-flex flex-column">
        <div class="gr-title">Grapher View</div>
        <div class="gr-menu d-flex">
          <span>File</span><span>Edit</span><span>View</span><span>Graph</span><span>Trace</span><span>Cursor</span><span>Legend</span><span>Tools</span><span>Help</span>
        </div>
        <div class="gr-tools d-flex">
          <div class="tb-btn"><svg><use href="#gr-open"/></svg></div>
          <div class="tb-btn"><svg><use href="#i-save"/></svg></div>
          <div class="tb-sep"></div>
          <div class="tb-btn text-secondary"><svg><use href="#i-undo"/></svg></div>
          <div class="tb-btn"><svg><use href="#gr-x"/></svg></div>
          <div class="tb-btn"><svg><use href="#i-copy"/></svg></div>
          <div class="tb-btn"><svg><use href="#i-paste"/></svg></div>
          <div class="tb-sep"></div>
          <div class="tb-btn"><svg><use href="#gr-grid"/></svg></div>
          <div class="tb-btn"><svg><use href="#gr-lines"/></svg></div>
          <div class="tb-btn"><svg><use href="#gr-plot"/></svg></div>
          <div class="tb-btn gr-on"><svg><use href="#gr-rev"/></svg></div>
          <div class="tb-sep"></div>
          <div class="tb-btn"><svg><use href="#gr-peak"/></svg></div>
          <div class="tb-btn"><svg><use href="#gr-pts"/></svg></div>
          <div class="tb-btn"><svg><use href="#gr-both"/></svg></div>
          <div class="tb-sep"></div>
          <div class="tb-btn"><svg><use href="#gr-zin"/></svg></div>
          <div class="tb-btn"><svg><use href="#gr-zout"/></svg></div>
        </div>
        <div class="gr-tabs d-flex">
          <div class="gr-tab">DC Operating Point</div>
          <div class="gr-tab">DC Operating Point</div>
          <div class="gr-tab">DC Operating Point</div>
          <div class="gr-tab gr-tab-last">DC Operating Point</div>
        </div>
        <div class="gr-plot">
          <div class="gr-l1">ex2.1</div>
          <div class="gr-l2">DC Operating Point</div>
          <table class="gr-grid">
            <colgroup><col class="gr-c0"><col class="gr-c1"><col class="gr-c2"><col></colgroup>
            <thead>
              <tr><th></th><th>Variable</th><th class="gr-op">Operating point value</th><th class="gr-fill"></th></tr>
            </thead>
            <tbody>
              <tr><th>1</th><td>V(1)</td><td>10.00000</td><td class="gr-none"></td></tr>
              <tr><th>2</th><td>I(V1)</td><td>-1.00100</td><td class="gr-none"></td></tr>
              <tr><th class="gr-rest"></th><td class="gr-none" colspan="3"></td></tr>
            </tbody>
          </table>
        </div>
      </section>
    </main>
  </div>
</div>
<script src="https://cdn.jsdelivr.net/npm/bootstrap@5.3.0/dist/js/bootstrap.bundle.min.js"></script>
</body>
</html>
